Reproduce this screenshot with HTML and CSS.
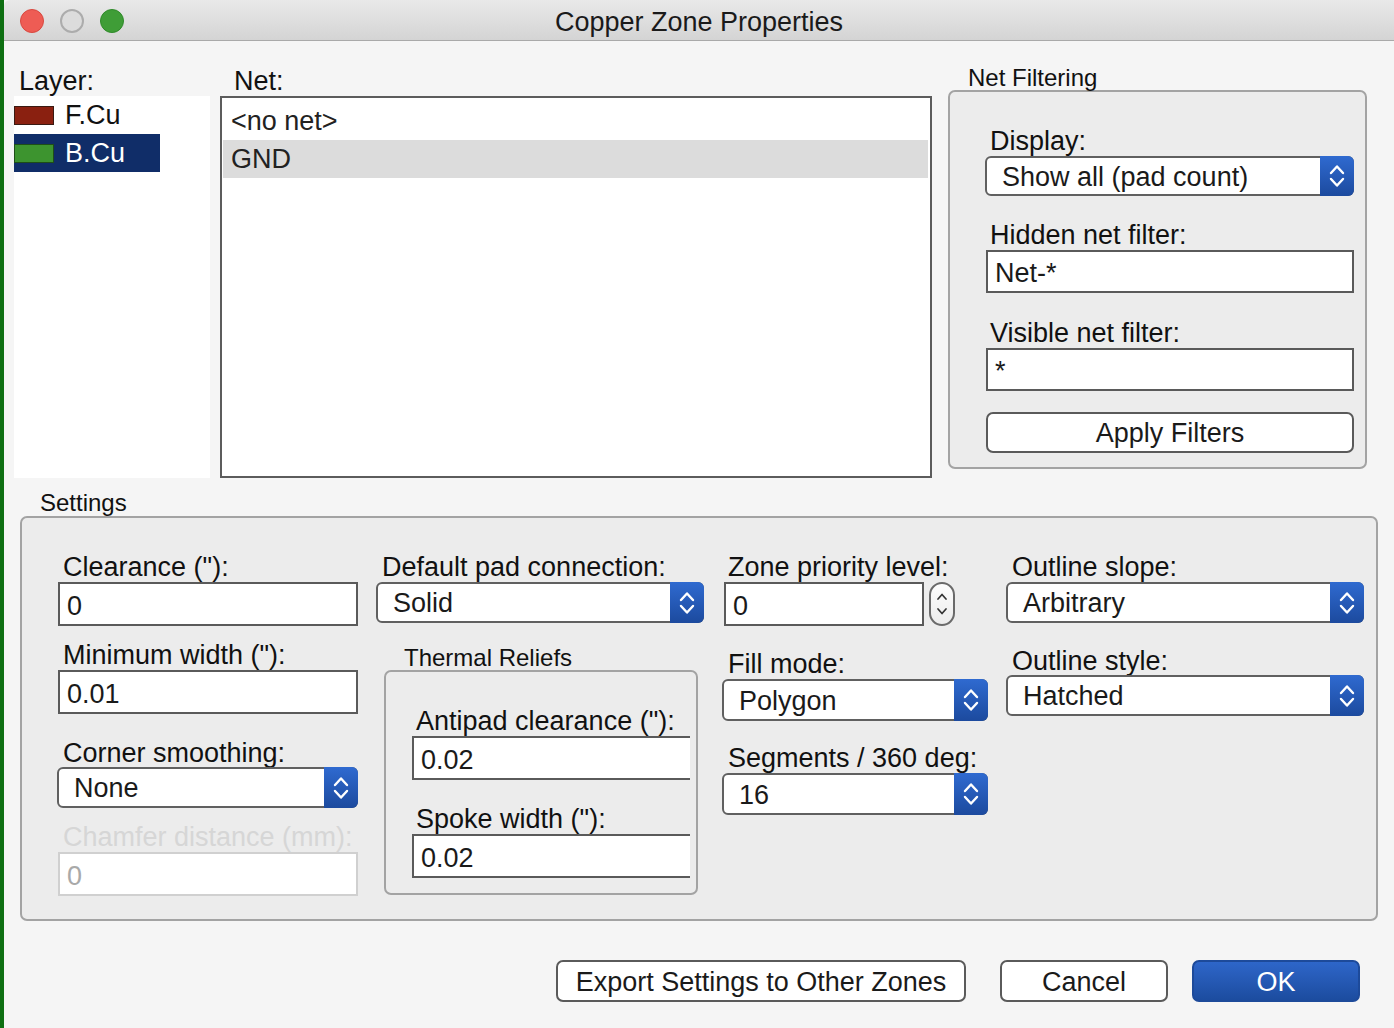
FILE: index.html
```html
<!DOCTYPE html>
<html>
<head>
<meta charset="utf-8">
<title>Copper Zone Properties</title>
<link rel="stylesheet" href="styles.css">
</head>
<body>
<div class="strip"></div>
<div class="window">
  <div class="titlebar">
    <div class="lights">
      <span class="light red"></span><span class="light gray"></span><span class="light green"></span>
    </div>
    <div class="title">Copper Zone Properties</div>
    <div></div>
  </div>

  <div class="top">
    <div class="col-layer">
      <div class="lbl">Layer:</div>
      <div class="layer-list">
        <div class="layer-row"><span class="swatch fcu"></span>F.Cu</div>
        <div class="layer-row sel"><span class="swatch bcu"></span>B.Cu</div>
      </div>
    </div>
    <div class="col-net">
      <div class="lbl">Net:</div>
      <div class="net-list">
        <div class="net-row">&lt;no net&gt;</div>
        <div class="net-row hl">GND</div>
      </div>
    </div>
    <div class="col-filter">
      <div class="glabel">Net Filtering</div>
      <div class="group filter-group">
        <div class="flbl lh30">Display:</div>
        <div class="select w-display h40"><span class="sel-text">Show all (pad count)</span><span class="arrow"><svg width="16" height="26" viewBox="0 0 16 26"><path d="M2 10 L8 3.5 L14 10 M2 16 L8 22.5 L14 16" fill="none" stroke="#fff" stroke-width="2.4" stroke-linecap="round" stroke-linejoin="round"/></svg></span></div>
        <div class="flbl lh29 mt25">Hidden net filter:</div>
        <div class="input w-filter h43 ml1">Net-*</div>
        <div class="flbl lh30 mt25">Visible net filter:</div>
        <div class="input w-filter h43 ml1">*</div>
        <div class="button w-filter h41 ml1 mt21">Apply Filters</div>
      </div>
    </div>
  </div>

  <div class="settings-wrap">
    <div class="glabel settings-label">Settings</div>
    <div class="group settings-group">
      <div class="scol c1">
        <div class="lbl2 lh30">Clearance ("):</div>
        <div class="input h44 w300">0</div>
        <div class="lbl2 lh30 mt14">Minimum width ("):</div>
        <div class="input h44 w300">0.01</div>
        <div class="lbl2 lh28 mt25">Corner smoothing:</div>
        <div class="select h41 w301 mlm1"><span class="sel-text">None</span><span class="arrow"><svg width="16" height="26" viewBox="0 0 16 26"><path d="M2 10 L8 3.5 L14 10 M2 16 L8 22.5 L14 16" fill="none" stroke="#fff" stroke-width="2.4" stroke-linecap="round" stroke-linejoin="round"/></svg></span></div>
        <div class="lbl2 lh30 mt14 disabled">Chamfer distance (mm):</div>
        <div class="input h44 w300 input-disabled">0</div>
      </div>
      <div class="scol c2">
        <div class="lbl2 lh30">Default pad connection:</div>
        <div class="select h41 w328"><span class="sel-text">Solid</span><span class="arrow"><svg width="16" height="26" viewBox="0 0 16 26"><path d="M2 10 L8 3.5 L14 10 M2 16 L8 22.5 L14 16" fill="none" stroke="#fff" stroke-width="2.4" stroke-linecap="round" stroke-linejoin="round"/></svg></span></div>
        <div class="glabel thermal-label">Thermal Reliefs</div>
        <div class="group thermal-group">
          <div class="lbl2 lh30">Antipad clearance ("):</div>
          <div class="input h44 w-thermal open-right">0.02</div>
          <div class="lbl2 lh30 mt24">Spoke width ("):</div>
          <div class="input h44 w-thermal open-right">0.02</div>
        </div>
      </div>
      <div class="scol c3">
        <div class="lbl2 lh30">Zone priority level:</div>
        <div class="spin-row">
          <div class="input h44 w200">0</div>
          <div class="spin"><svg width="14" height="32" viewBox="0 0 14 32"><path d="M3 11 L7 6.5 L11 11 M3 21 L7 25.5 L11 21" fill="none" stroke="#333" stroke-width="1.7" stroke-linecap="round" stroke-linejoin="round"/></svg></div>
        </div>
        <div class="lbl2 lh29 mt24">Fill mode:</div>
        <div class="select h42 w266"><span class="sel-text">Polygon</span><span class="arrow"><svg width="16" height="26" viewBox="0 0 16 26"><path d="M2 10 L8 3.5 L14 10 M2 16 L8 22.5 L14 16" fill="none" stroke="#fff" stroke-width="2.4" stroke-linecap="round" stroke-linejoin="round"/></svg></span></div>
        <div class="lbl2 lh29 mt23">Segments / 360 deg:</div>
        <div class="select h42 w266"><span class="sel-text">16</span><span class="arrow"><svg width="16" height="26" viewBox="0 0 16 26"><path d="M2 10 L8 3.5 L14 10 M2 16 L8 22.5 L14 16" fill="none" stroke="#fff" stroke-width="2.4" stroke-linecap="round" stroke-linejoin="round"/></svg></span></div>
      </div>
      <div class="scol c4">
        <div class="lbl2 lh30">Outline slope:</div>
        <div class="select h41 w358"><span class="sel-text">Arbitrary</span><span class="arrow"><svg width="16" height="26" viewBox="0 0 16 26"><path d="M2 10 L8 3.5 L14 10 M2 16 L8 22.5 L14 16" fill="none" stroke="#fff" stroke-width="2.4" stroke-linecap="round" stroke-linejoin="round"/></svg></span></div>
        <div class="lbl2 lh28 mt24">Outline style:</div>
        <div class="select h41 w358"><span class="sel-text">Hatched</span><span class="arrow"><svg width="16" height="26" viewBox="0 0 16 26"><path d="M2 10 L8 3.5 L14 10 M2 16 L8 22.5 L14 16" fill="none" stroke="#fff" stroke-width="2.4" stroke-linecap="round" stroke-linejoin="round"/></svg></span></div>
      </div>
    </div>
  </div>

  <div class="buttons">
    <div class="button btn-export">Export Settings to Other Zones</div>
    <div class="button btn-cancel">Cancel</div>
    <div class="button btn-ok">OK</div>
  </div>
</div>
</body>
</html>
```

FILE: styles.css
```css
* { box-sizing: border-box; }

html, body {
  margin: 0;
  padding: 0;
}

body {
  width: 1394px;
  height: 1028px;
  overflow: hidden;
  display: flex;
  font-family: "Liberation Sans", Arial, sans-serif;
  font-size: 27px;
  color: #111;
  background: #f5f5f5;
}

.strip {
  width: 4px;
  background: #0e6f12;
  flex: none;
}

.window {
  flex: 1;
  display: flex;
  flex-direction: column;
  background: #f5f5f5;
}

/* title bar */
.titlebar {
  height: 41px;
  display: grid;
  grid-template-columns: 1fr auto 1fr;
  align-items: center;
  background: linear-gradient(#e9e9e9, #d4d4d4);
  border-bottom: 1px solid #a9a9a9;
  border-top-left-radius: 6px;
}

.lights {
  display: flex;
  gap: 16px;
  padding-left: 16px;
}

.light {
  width: 24px;
  height: 24px;
  border-radius: 50%;
  display: block;
}

.light.red { background: #ee5c54; border: 1px solid #d8483f; }
.light.gray { background: #dcdcdc; border: 2px solid #acacac; }
.light.green { background: #3f9d37; border: 1px solid #2f8a2a; }

.title {
  font-size: 27px;
  color: #1a1a1a;
  line-height: 40px;
  padding-top: 2px;
}

/* top row */
.top {
  display: flex;
  margin-top: 24px;
  padding-left: 10px;
}

.lbl {
  line-height: 29px;
  height: 29px;
}

.col-layer, .col-net {
  padding-top: 2px;
}

.col-layer .lbl { padding-left: 5px; }

.layer-list {
  width: 196px;
  height: 382px;
  background: #fff;
}

.layer-row {
  width: 146px;
  height: 38px;
  display: flex;
  align-items: center;
  gap: 11px;
  line-height: 38px;
}

.layer-row.sel {
  background: #102d68;
  color: #fff;
}

.swatch {
  width: 40px;
  height: 19px;
  border: 1px solid #3a1a12;
  display: block;
}

.swatch.fcu { background: #8a2010; }
.swatch.bcu { background: #3d942f; border-color: #1e4e18; }

.col-net {
  margin-left: 10px;
}

.col-net .lbl { padding-left: 14px; }

.net-list {
  width: 712px;
  height: 382px;
  background: #fff;
  border: 2px solid #5c5c5c;
  padding: 4px 2px 0 1px;
}

.net-row {
  height: 38px;
  line-height: 38px;
  padding-left: 8px;
  color: #222;
}

.net-row.hl { background: #dcdcdc; }

.col-filter {
  margin-left: 16px;
}

.glabel {
  font-size: 24px;
  color: #111;
}

.col-filter .glabel {
  line-height: 25px;
  height: 25px;
  padding-left: 20px;
}

.group {
  background: #ececec;
  border: 2px solid #a3a3a3;
  border-radius: 7px;
}

.filter-group {
  width: 419px;
  height: 379px;
  padding: 34px 0 0 35px;
  display: flex;
  flex-direction: column;
  align-items: flex-start;
}

.flbl { padding-left: 5px; }

.lh28 { line-height: 28px; height: 28px; }
.lh29 { line-height: 29px; height: 29px; }
.lh30 { line-height: 30px; height: 30px; }

.mt14 { margin-top: 14px; }
.mt21 { margin-top: 21px; }
.mt23 { margin-top: 23px; }
.mt24 { margin-top: 24px; }
.mt25 { margin-top: 25px; }
.ml1 { margin-left: 1px; }
.mlm1 { margin-left: -1px; }

.h40 { height: 40px; }
.h41 { height: 41px; }
.h42 { height: 42px; }
.h43 { height: 43px; }
.h44 { height: 44px; }

.w-display { width: 369px; }
.w-filter { width: 368px; }
.w200 { width: 200px; }
.w266 { width: 266px; }
.w300 { width: 300px; }
.w301 { width: 301px; }
.w328 { width: 328px; }
.w358 { width: 358px; }
.w-thermal { width: 278px; }

/* controls */
.input {
  background: #fff;
  border: 2px solid #5a5a5a;
  padding: 4px 0 0 7px;
  display: flex;
  align-items: center;
  color: #1a1a1a;
}

.input.open-right { border-right: none; }

.input-disabled {
  border-color: #d0d0d0;
  color: #a9a9a9;
}

.select {
  background: #fff;
  border: 2px solid #606060;
  border-radius: 6px;
  display: flex;
  align-items: stretch;
}

.sel-text {
  flex: 1;
  padding: 2px 0 0 15px;
  display: flex;
  align-items: center;
  color: #1a1a1a;
}

.arrow {
  width: 34px;
  margin: -2px -2px -2px 0;
  border-radius: 0 6px 6px 0;
  background: linear-gradient(#2f6ad0, #1c4a9e);
  display: flex;
  align-items: center;
  justify-content: center;
}

.arrow svg { display: block; }

.button {
  background: #fff;
  border: 2px solid #5a5a5a;
  border-radius: 7px;
  display: flex;
  align-items: center;
  justify-content: center;
  color: #1a1a1a;
  padding-top: 2px;
}

/* settings */
.settings-wrap {
  margin-top: 12px;
  margin-left: 16px;
}

.settings-label {
  line-height: 26px;
  height: 26px;
  padding-left: 20px;
}

.settings-group {
  width: 1358px;
  height: 405px;
  padding: 34px 0 0 36px;
  display: flex;
  gap: 18px;
}

.scol {
  display: flex;
  flex-direction: column;
  align-items: flex-start;
}

.c1 { width: 300px; }
.c2 { width: 328px; }
.c3 { width: 266px; }
.c4 { width: 358px; }

.lbl2 { padding-left: 5px; white-space: nowrap; }
.c2 > .lbl2, .c3 > .lbl2, .c4 > .lbl2 { padding-left: 6px; }

.disabled { color: #d6d6d6; }

.thermal-label {
  margin-top: 22px;
  line-height: 25px;
  height: 25px;
  padding-left: 28px;
}

.thermal-group {
  margin-left: 8px;
  width: 314px;
  height: 225px;
  padding: 34px 0 0 26px;
  display: flex;
  flex-direction: column;
  align-items: flex-start;
  overflow: hidden;
}

.thermal-group .lbl2 { padding-left: 4px; }

.spin-row {
  display: flex;
  margin-left: 2px;
}

.spin {
  margin-left: 5px;
  width: 26px;
  height: 44px;
  border: 2px solid #6a6a6a;
  border-radius: 13px;
  background: linear-gradient(#fdfdfd, #ececec);
  display: flex;
  align-items: center;
  justify-content: center;
}

/* bottom buttons */
.buttons {
  margin-top: 39px;
  display: flex;
  justify-content: flex-end;
  padding-right: 34px;
}

.buttons .button { height: 42px; }

.btn-export { width: 410px; }
.btn-cancel { width: 168px; margin-left: 34px; }
.btn-ok {
  width: 168px;
  margin-left: 24px;
  background: linear-gradient(#2e66c9, #1c4c9f);
  border-color: #1d4a9a;
  color: #fff;
}
```
